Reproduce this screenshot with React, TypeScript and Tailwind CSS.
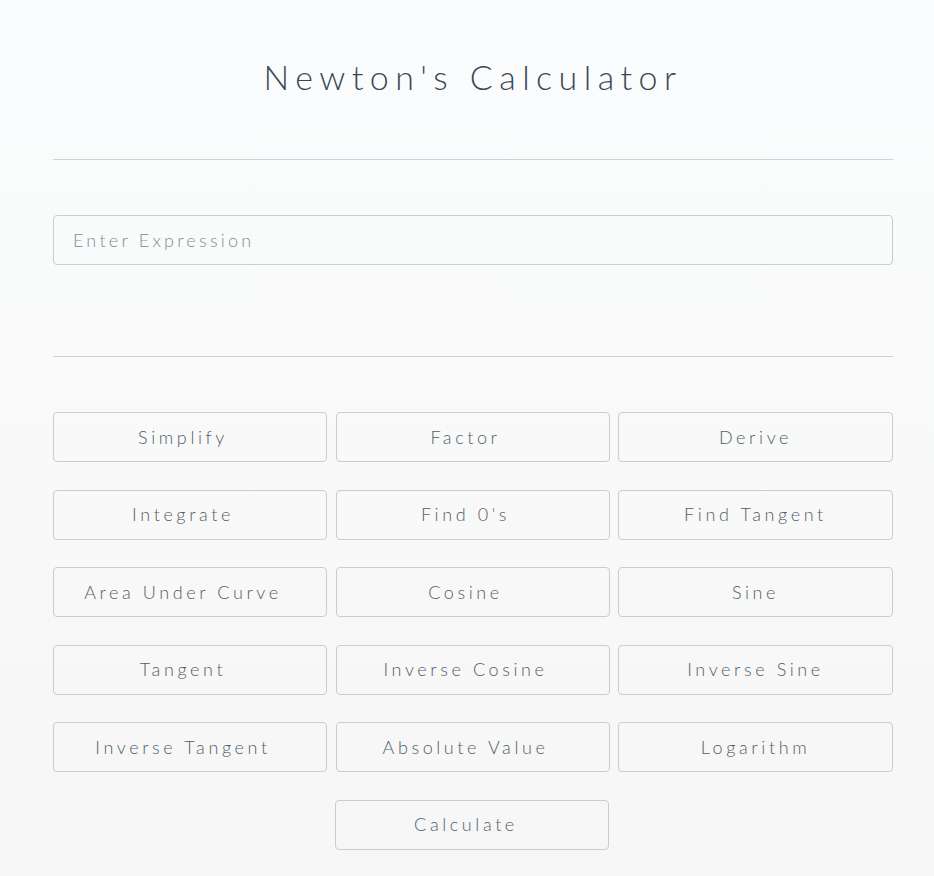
import React, { useState } from 'react';

const buttons: string[][] = [
  ['Simplify', 'Factor', 'Derive'],
  ['Integrate', "Find 0's", 'Find Tangent'],
  ['Area Under Curve', 'Cosine', 'Sine'],
  ['Tangent', 'Inverse Cosine', 'Inverse Sine'],
  ['Inverse Tangent', 'Absolute Value', 'Logarithm'],
];

const btnBase =
  'h-[50px] rounded-[4px] border border-[#c9cdd1] bg-transparent text-[18px] font-light tracking-[0.2em] text-[#525d67] hover:bg-white transition-colors';

const App: React.FC = () => {
  const [expression, setExpression] = useState('');
  const [selected, setSelected] = useState<string | null>(null);

  return (
    <div
      className="min-h-screen bg-gradient-to-b from-[#fbfcfd] to-[#f6f6f6]"
      style={{ fontFamily: 'Lato, "Open Sans", sans-serif' }}
    >
      <div className="w-[840px] ml-[53px] pt-[53px]">
        <h1 className="text-center text-[34px] leading-[48px] font-light tracking-[0.19em] text-[#3b4853]">
          Newton's Calculator
        </h1>

        <hr className="mt-[58px] border-t border-[#cfd2d5]" />

        <input
          value={expression}
          onChange={e => setExpression(e.target.value)}
          placeholder="Enter Expression"
          className="mt-[55px] w-full h-[50px] px-[19px] rounded-[4px] border border-[#c9cdd1] bg-transparent text-[18px] font-light tracking-[0.18em] text-[#56616b] placeholder:text-[#838c94] outline-none"
        />

        <hr className="mt-[91px] border-t border-[#cfd2d5]" />

        <div className="mt-[55px] flex flex-col gap-[27.6px]">
          {buttons.map((row, i) => (
            <div key={i} className="grid grid-cols-[274px_274px_275px] gap-x-[8px] justify-between">
              {row.map((label, j) => (
                <button
                  key={label}
                  onClick={() => setSelected(label)}
                  className={`${btnBase} ${j < 2 ? 'pr-[14px]' : ''} ${selected === label ? 'bg-white' : ''}`}
                >
                  {label}
                </button>
              ))}
            </div>
          ))}
          <div className="flex justify-center">
            <button className={`${btnBase} w-[274px] pr-[12px] ml-[-2px]`}>Calculate</button>
          </div>
        </div>
      </div>
    </div>
  );
};

export default App;
